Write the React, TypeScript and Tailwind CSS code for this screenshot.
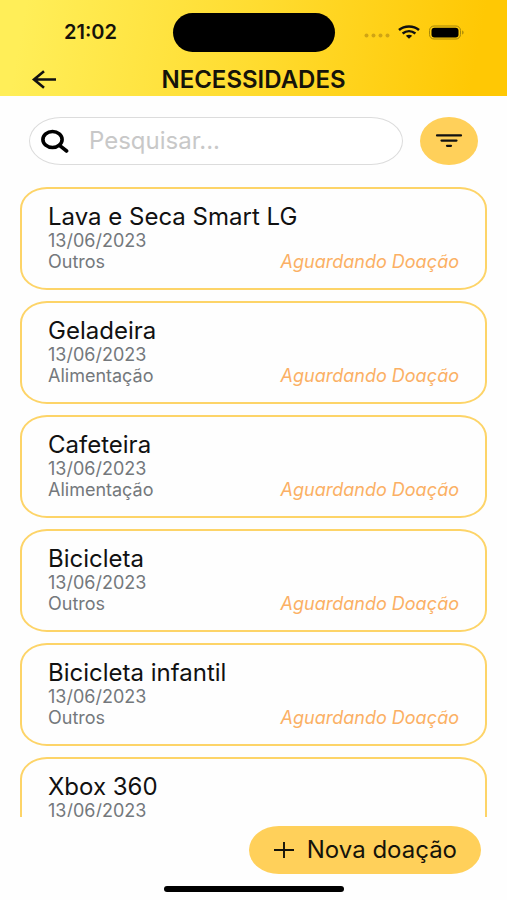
import { useState } from 'react';

type Need = {
  id: number;
  title: string;
  date: string;
  category: string;
  status: string;
};

const needs: Need[] = [
  { id: 1, title: 'Lava e Seca Smart LG', date: '13/06/2023', category: 'Outros', status: 'Aguardando Doação' },
  { id: 2, title: 'Geladeira', date: '13/06/2023', category: 'Alimentação', status: 'Aguardando Doação' },
  { id: 3, title: 'Cafeteira', date: '13/06/2023', category: 'Alimentação', status: 'Aguardando Doação' },
  { id: 4, title: 'Bicicleta', date: '13/06/2023', category: 'Outros', status: 'Aguardando Doação' },
  { id: 5, title: 'Bicicleta infantil', date: '13/06/2023', category: 'Outros', status: 'Aguardando Doação' },
  { id: 6, title: 'Xbox 360', date: '13/06/2023', category: 'Outros', status: 'Aguardando Doação' },
];

const StatusBar = () => (
  <div className="grid h-16 grid-cols-[1fr_auto_1fr] items-center">
    <p className="pl-16 text-xl font-semibold">21:02</p>
    <div className="h-[39px] w-[162px] rounded-full bg-black" />
    <div className="flex items-center justify-end pr-[42px]">
      <svg className="mt-1" width="26" height="14" viewBox="0 0 26 14" fill="#d0a414" aria-hidden="true">
        <circle cx="2.5" cy="8.5" r="2" />
        <circle cx="9.5" cy="8.5" r="2" />
        <circle cx="16.5" cy="8.5" r="2" />
        <circle cx="23.5" cy="8.5" r="2" />
      </svg>
      <svg className="ml-2" width="22" height="14" viewBox="0 0 22 14" aria-hidden="true">
        <g fill="none" stroke="#111" strokeWidth="2.5">
          <path d="M1 5C6.5 0.2 15.5 0.2 21 5" />
          <path d="M4.6 8.6C8.4 5.6 13.6 5.6 17.4 8.6" />
        </g>
        <path d="M7.8 10.8C9.6 9.4 12.4 9.4 14.2 10.8L11 13.8Z" fill="#111" />
      </svg>
      <svg className="ml-2" width="37" height="15" viewBox="0 0 37 15" aria-hidden="true">
        <rect x="1.5" y="1" width="31" height="13" rx="4.5" fill="none" stroke="#a58709" />
        <rect x="3.5" y="2.8" width="27" height="9.6" rx="3" fill="#000" />
        <path d="M34.2 5.5C36 6 36 9 34.2 9.5Z" fill="#a58709" />
      </svg>
    </div>
  </div>
);

const Header = () => (
  <header className="shrink-0 bg-[linear-gradient(100deg,#ffee58_5%,#ffdc30_50%,#ffc804_93%)] text-[#15130a]">
    <StatusBar />
    <div className="grid h-8 grid-cols-[1fr_auto_1fr] items-center">
      <button className="ml-[30px] w-7" aria-label="Voltar">
        <svg width="28" height="22" viewBox="0 0 28 22" fill="none" stroke="#111" strokeWidth="2.6" aria-hidden="true">
          <path d="M26 10.5H4M14 2.2L4 10.5L14 18.8" />
        </svg>
      </button>
      <h1 className="text-2xl leading-[30px] font-semibold">NECESSIDADES</h1>
    </div>
  </header>
);

const NeedCard = ({ need }: { need: Need }) => (
  <li className="h-[103px] shrink-0 rounded-[27px/22px] border-2 border-[#fdd468] px-[26px] pt-[14px]">
    <h2 className="text-2xl leading-7 text-[#111]">{need.title}</h2>
    <p className="text-lg leading-5 text-[#74787c]">{need.date}</p>
    <div className="flex justify-between text-lg leading-[22px]">
      <p className="text-[#74787c]">{need.category}</p>
      <p className="text-[#fbb064] italic">{need.status}</p>
    </div>
  </li>
);

export default function App() {
  const [search, setSearch] = useState('');
  const filtered = needs.filter((need) => need.title.toLowerCase().includes(search.toLowerCase()));

  return (
    <div className="flex h-screen flex-col bg-[#fefefe] font-['Inter',sans-serif]">
      <Header />
      <div className="flex shrink-0 items-center gap-[17px] px-[29px] pt-[21px]">
        <label className="flex h-12 flex-1 items-center rounded-[32px/24px] border border-[#dcdcdc] bg-white pl-[11px]">
          <svg className="shrink-0" width="28" height="24" viewBox="0 0 28 24" fill="none" stroke="#000" aria-hidden="true">
            <ellipse cx="11.5" cy="10.5" rx="9.6" ry="8" strokeWidth="3.6" />
            <path d="M18.5 16.4L25.6 22" strokeWidth="3.6" strokeLinecap="round" />
          </svg>
          <input
            className="ml-5 w-full min-w-0 text-2xl leading-8 outline-none placeholder:text-[#c8c8c8]"
            type="text"
            aria-label="Pesquisar"
            placeholder="Pesquisar..."
            value={search}
            onChange={(e) => setSearch(e.target.value)}
          />
        </label>
        <button className="flex h-12 w-[58px] items-center justify-center rounded-[50%] bg-[#ffd05a]" aria-label="Filtrar">
          <svg width="28" height="16" viewBox="0 0 28 16" stroke="#111" strokeWidth="2.2" strokeLinecap="round" aria-hidden="true">
            <path d="M2 2.4H26M6.5 7.6H21.5M12 12.8H16" />
          </svg>
        </button>
      </div>
      <ul className="mt-[22px] flex min-h-0 flex-1 flex-col gap-[11px] overflow-y-auto px-5 [scrollbar-width:none]">
        {filtered.map((need) => (
          <NeedCard key={need.id} need={need} />
        ))}
      </ul>
      <footer className="flex shrink-0 flex-col pt-[9px] pb-2">
        <button className="mr-[26px] flex h-12 items-center gap-3 self-end rounded-[30px/24px] bg-[#ffd05a] px-6 text-2xl text-[#15130a]">
          <svg width="22" height="18" viewBox="0 0 22 18" fill="none" stroke="#15130a" strokeWidth="1.9" aria-hidden="true">
            <path d="M1 9H21M11 1V17" />
          </svg>
          Nova doação
        </button>
        <div className="mt-3 h-[6px] w-[180px] self-center rounded-full bg-black" />
      </footer>
    </div>
  );
}
